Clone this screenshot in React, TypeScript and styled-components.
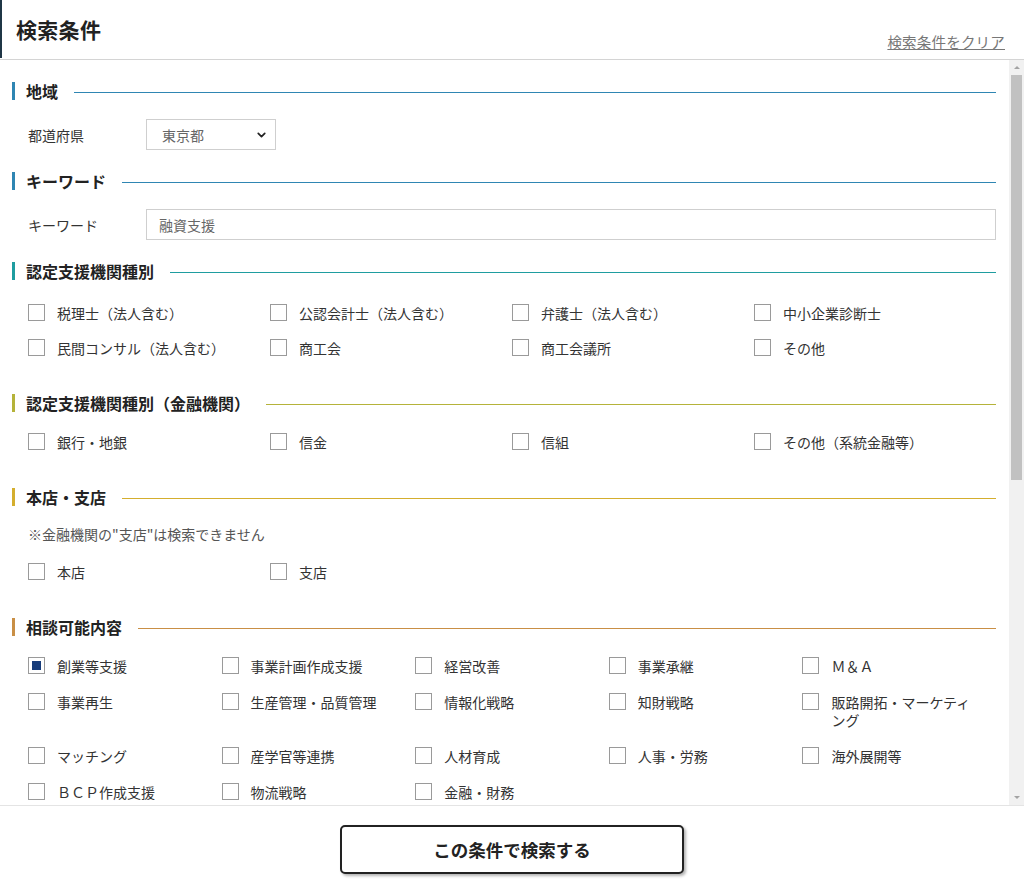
import React from "react";
import styled, { createGlobalStyle } from "styled-components";
import { ChevronDown } from "lucide-react";

const GlobalStyle = createGlobalStyle`
  *, *::before, *::after { box-sizing: border-box; }
  html, body { margin: 0; padding: 0; height: 100%; background: #fff; }
  body {
    font-family: "Noto Sans CJK JP", "Noto Sans", sans-serif;
    color: #333;
  }
  #root { height: 100%; }
`;

const Page = styled.div`
  display: flex;
  flex-direction: column;
  height: 100vh;
  background: #fff;
`;

const Header = styled.header`
  flex: none;
  height: 60px;
  display: flex;
  justify-content: space-between;
  align-items: flex-start;
  border-bottom: 1px solid #d4d4d4;
`;

const TitleBox = styled.div`
  height: 58px;
  display: flex;
  align-items: center;
  padding-left: 14px;
  border-left: 2px solid #1f3646;
`;

const Title = styled.h1`
  margin: 0;
  font-size: 21px;
  font-weight: 700;
  color: #222;
  letter-spacing: 0.3px;
  line-height: 1;
`;

const ClearLink = styled.a`
  align-self: flex-end;
  margin: 0 19px 8px 0;
  font-size: 14.5px;
  line-height: 18px;
  color: #777;
  text-decoration: underline;
  letter-spacing: 0.2px;
`;

const Middle = styled.div`
  flex: 1;
  min-height: 0;
  display: flex;
`;

const Viewport = styled.main`
  flex: 1;
  min-width: 0;
  overflow-y: auto;
  scrollbar-width: none;
  &::-webkit-scrollbar { display: none; }
`;

const ScrollTrack = styled.div`
  flex: none;
  width: 15px;
  display: flex;
  flex-direction: column;
  background: #f1f1f1;
`;

const ScrollButton = styled.div<{ $down?: boolean }>`
  flex: none;
  height: 15px;
  display: flex;
  align-items: center;
  justify-content: center;

  &::before {
    content: "";
    width: 0;
    height: 0;
    border-left: 3px solid transparent;
    border-right: 3px solid transparent;
    ${(p) =>
      p.$down ? "border-top: 3px solid #a3a3a3;" : "border-bottom: 3px solid #a3a3a3;"}
  }
`;

const ScrollRail = styled.div`
  flex: 1;
  padding: 0 2px;
`;

const ScrollThumb = styled.div`
  height: 405px;
  background: #c1c1c1;
`;

const Content = styled.div`
  display: flex;
  flex-direction: column;
  gap: 20px;
  padding: 20px 13px 0 12px;
`;

const Section = styled.section`
  display: flex;
  flex-direction: column;
`;

const Heading = styled.div`
  display: flex;
  align-items: flex-start;
  height: 22px;
  margin-bottom: 17px;
`;

const HeadingBar = styled.span<{ $color: string }>`
  flex: none;
  width: 3px;
  height: 18px;
  margin: 2px 11px 0 0;
  background: ${(p) => p.$color};
`;

const HeadingText = styled.h2`
  margin: 0;
  font-size: 16px;
  font-weight: 700;
  line-height: 22px;
  color: #222;
`;

const HeadingRule = styled.span<{ $color: string }>`
  flex: 1;
  height: 1px;
  margin: 12px 0 0 16px;
  background-color: ${(p) => p.$color};
`;

const FieldRow = styled.div`
  display: flex;
  align-items: center;
  padding-left: 16px;
`;

const FieldLabel = styled.label`
  width: 118px;
  flex: none;
  font-size: 14px;
  line-height: 18px;
  color: #333;
`;

const SelectWrap = styled.div`
  position: relative;
  width: 130px;
  height: 31px;
`;

const Select = styled.select`
  appearance: none;
  width: 100%;
  height: 100%;
  border: 1px solid #cfcfcf;
  border-radius: 0;
  background: #fff;
  padding: 0 0 0 15px;
  font-family: inherit;
  font-size: 14px;
  color: #666;
  outline: none;
`;

const SelectIcon = styled.span`
  position: absolute;
  right: 8px;
  top: 50%;
  transform: translateY(-50%);
  display: flex;
  color: #222;
  pointer-events: none;
`;

const TextInput = styled.input`
  flex: 1;
  height: 31px;
  border: 1px solid #cfcfcf;
  border-radius: 0;
  padding: 0 12px;
  font-family: inherit;
  font-size: 14px;
  color: #666;
  outline: none;
`;

const Note = styled.p`
  margin: 0 0 20px;
  padding-left: 16px;
  font-size: 14px;
  line-height: 18px;
  color: #555;
`;

const CheckGrid = styled.div<{ $cols: number; $gap: number; $top: number }>`
  display: grid;
  grid-template-columns: repeat(${(p) => p.$cols}, 1fr);
  row-gap: ${(p) => p.$gap}px;
  padding: ${(p) => p.$top}px 0 15px 16px;
`;

const CheckItem = styled.label`
  display: flex;
  align-items: flex-start;
  gap: 12px;
  padding-right: 16px;
  font-size: 14px;
  line-height: 18px;
  color: #333;
`;

const Box = styled.input`
  appearance: none;
  flex: none;
  width: 17px;
  height: 17px;
  margin: 0;
  border: 1px solid #9a9a9a;
  background: #fff;
  display: grid;
  place-items: center;

  &:checked::after {
    content: "";
    width: 9px;
    height: 9px;
    background: #173c7a;
  }
`;

const Footer = styled.footer`
  flex: none;
  height: 81px;
  display: flex;
  justify-content: center;
  align-items: flex-start;
  padding-top: 19px;
  border-top: 1px solid #e4e4e4;
`;

const SearchButton = styled.button`
  width: 344px;
  height: 49px;
  border: 2px solid #222;
  border-radius: 5px;
  background: #fff;
  box-shadow: 2px 2px 3px rgba(0, 0, 0, 0.3);
  font-family: inherit;
  font-size: 17.5px;
  font-weight: 700;
  color: #222;
  cursor: pointer;
`;

type CheckSection = {
  title: string;
  color: string;
  cols: number;
  gap: number;
  top: number;
  note?: string;
  items: string[];
  checked?: string[];
};

const BLUE = "#2f86b3";

const checkSections: CheckSection[] = [
  {
    title: "認定支援機関種別",
    color: "#1f9da0",
    cols: 4,
    gap: 17,
    top: 5,
    items: [
      "税理士（法人含む）",
      "公認会計士（法人含む）",
      "弁護士（法人含む）",
      "中小企業診断士",
      "民間コンサル（法人含む）",
      "商工会",
      "商工会議所",
      "その他",
    ],
  },
  {
    title: "認定支援機関種別（金融機関）",
    color: "#b5b33a",
    cols: 4,
    gap: 17,
    top: 2,
    items: ["銀行・地銀", "信金", "信組", "その他（系統金融等）"],
  },
  {
    title: "本店・支店",
    color: "#d4ae2e",
    cols: 4,
    gap: 17,
    top: 0,
    note: "※金融機関の\"支店\"は検索できません",
    items: ["本店", "支店"],
  },
  {
    title: "相談可能内容",
    color: "#c98f45",
    cols: 5,
    gap: 18,
    top: 2,
    items: [
      "創業等支援",
      "事業計画作成支援",
      "経営改善",
      "事業承継",
      "Ｍ＆Ａ",
      "事業再生",
      "生産管理・品質管理",
      "情報化戦略",
      "知財戦略",
      "販路開拓・マーケティング",
      "マッチング",
      "産学官等連携",
      "人材育成",
      "人事・労務",
      "海外展開等",
      "ＢＣＰ作成支援",
      "物流戦略",
      "金融・財務",
    ],
    checked: ["創業等支援"],
  },
];

function SectionHeading({ title, color }: { title: string; color: string }) {
  return (
    <Heading>
      <HeadingBar $color={color} />
      <HeadingText>{title}</HeadingText>
      <HeadingRule $color={color} />
    </Heading>
  );
}

export default function App() {
  return (
    <>
      <GlobalStyle />
      <Page>
        <Header>
          <TitleBox>
            <Title>検索条件</Title>
          </TitleBox>
          <ClearLink href="#">検索条件をクリア</ClearLink>
        </Header>

        <Middle>
          <Viewport>
            <Content>
              <Section>
                <SectionHeading title="地域" color={BLUE} />
                <FieldRow>
                  <FieldLabel>都道府県</FieldLabel>
                  <SelectWrap>
                    <Select defaultValue="東京都">
                      <option>北海道</option>
                      <option>東京都</option>
                      <option>大阪府</option>
                    </Select>
                    <SelectIcon>
                      <ChevronDown size={13} strokeWidth={3.2} />
                    </SelectIcon>
                  </SelectWrap>
                </FieldRow>
              </Section>

              <Section>
                <SectionHeading title="キーワード" color={BLUE} />
                <FieldRow>
                  <FieldLabel>キーワード</FieldLabel>
                  <TextInput type="text" defaultValue="融資支援" />
                </FieldRow>
              </Section>

              {checkSections.map((s) => (
                <Section key={s.title}>
                  <SectionHeading title={s.title} color={s.color} />
                  {s.note && <Note>{s.note}</Note>}
                  <CheckGrid $cols={s.cols} $gap={s.gap} $top={s.top}>
                    {s.items.map((it) => (
                      <CheckItem key={it}>
                        <Box type="checkbox" defaultChecked={s.checked?.includes(it)} />
                        <span>{it}</span>
                      </CheckItem>
                    ))}
                  </CheckGrid>
                </Section>
              ))}
            </Content>
          </Viewport>
          <ScrollTrack aria-hidden>
            <ScrollButton />
            <ScrollRail>
              <ScrollThumb />
            </ScrollRail>
            <ScrollButton $down />
          </ScrollTrack>
        </Middle>

        <Footer>
          <SearchButton type="button">この条件で検索する</SearchButton>
        </Footer>
      </Page>
    </>
  );
}
